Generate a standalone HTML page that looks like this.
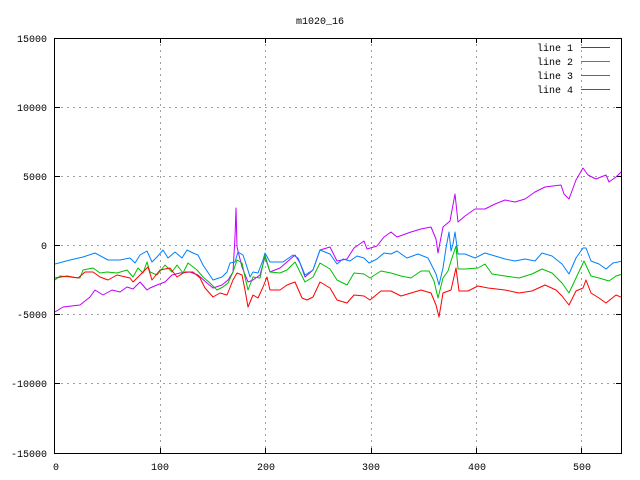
<!DOCTYPE html>
<html><head><style>
html,body{margin:0;padding:0;background:#fff;}
svg{display:block;font-family:"Liberation Mono","DejaVu Sans Mono",monospace;font-size:10px;}
</style></head><body>
<svg width="640" height="480" viewBox="0 0 640 480" xmlns="http://www.w3.org/2000/svg">
<rect width="640" height="480" fill="#fff"/>
<g stroke="#a0a0a0" stroke-width="1" stroke-dasharray="2,4" fill="none">
<line x1="55" y1="107.5" x2="621" y2="107.5"/>
<line x1="55" y1="176.5" x2="621" y2="176.5"/>
<line x1="55" y1="245.5" x2="621" y2="245.5"/>
<line x1="55" y1="314.5" x2="621" y2="314.5"/>
<line x1="55" y1="383.5" x2="621" y2="383.5"/>
<line x1="160.5" y1="38" x2="160.5" y2="453"/>
<line x1="265.5" y1="38" x2="265.5" y2="453"/>
<line x1="371.5" y1="38" x2="371.5" y2="453"/>
<line x1="476.5" y1="38" x2="476.5" y2="453"/>
<line x1="581.5" y1="38" x2="581.5" y2="453"/>
</g>
<g stroke="#000" stroke-width="1" fill="none">
<rect x="54.5" y="38.5" width="567" height="415"/>
<path d="M55 107.5h5M55 176.5h5M55 245.5h5M55 314.5h5M55 383.5h5M616 107.5h5M616 176.5h5M616 245.5h5M616 314.5h5M616 383.5h5M160.5 453v-5M265.5 453v-5M371.5 453v-5M476.5 453v-5M581.5 453v-5M160.5 38v5M265.5 38v5M371.5 38v5M476.5 38v5M581.5 38v5"/>
</g>
<g fill="#000">
<text x="320" y="24" text-anchor="middle">m1020_16</text>
<g text-anchor="end">
<text x="47" y="42">15000</text>
<text x="47" y="111">10000</text>
<text x="47" y="180">5000</text>
<text x="47" y="249">0</text>
<text x="47" y="318">-5000</text>
<text x="47" y="387">-10000</text>
<text x="47" y="457">-15000</text>
</g>
<g text-anchor="middle">
<text x="56" y="470">0</text>
<text x="160" y="470">100</text>
<text x="266" y="470">200</text>
<text x="371" y="470">300</text>
<text x="477" y="470">400</text>
<text x="582" y="470">500</text>
</g>
<g text-anchor="end">
<text x="573" y="51">line 1</text>
<text x="573" y="65">line 2</text>
<text x="573" y="79">line 3</text>
<text x="573" y="93">line 4</text>
</g>
</g>
<rect x="581" y="47" width="29" height="1" fill="#ff0000"/>
<rect x="581" y="61" width="29" height="1" fill="#00c000"/>
<rect x="581" y="75" width="29" height="1" fill="#0080ff"/>
<rect x="581" y="89" width="29" height="1" fill="#c000ff"/>
<defs><clipPath id="c"><rect x="55" y="39" width="566" height="414"/></clipPath></defs>
<g clip-path="url(#c)" fill="none" stroke-width="1" stroke-linejoin="round">
<polyline stroke="#c000ff" points="55,312 63,307 80,305 90,297 95,290 103,295 112,290 120,292 127,287 133,289 140,282 147,290 150,288 157,285 165,282 172,275 180,273 190,272 198,275 207,283 213,288 222,285 228,280 233,272 235,237 236,208 237,247 242,267 248,282 253,280 260,275 265,257 270,272 280,268 287,262 295,255 300,263 305,277 313,270 320,250 330,247 333,253 337,261 347,259 354,248 364,241 367,249 377,246 384,237 391,232 397,237 411,232 421,229 431,227 436,239 438,253 443,227 450,221 455,194 458,222 465,216 475,209 485,209 495,204 505,200 515,202 525,199 535,192 545,187 561,185 564,194 569,199 576,180 583,168 588,175 596,179 606,175 609,182 616,177 623,170"/>
<polyline stroke="#0080ff" points="55,264 70,260 83,257 95,253 108,260 120,260 130,258 135,263 140,255 147,251 152,262 157,257 163,250 168,258 175,252 182,258 187,250 193,253 198,255 203,265 213,280 222,277 227,272 230,263 235,262 238,252 243,255 247,267 250,277 253,272 258,273 263,260 265,253 270,262 283,262 293,255 298,258 305,275 313,270 320,250 330,254 337,264 343,259 350,261 357,256 364,258 369,263 377,259 384,253 391,254 397,251 407,258 418,254 428,258 431,264 436,274 439,285 443,268 446,248 449,232 451,251 453,244 455,232 458,254 465,254 475,258 485,253 495,256 505,259 515,261 525,259 535,261 542,253 552,256 562,264 569,274 576,258 583,248 586,248 591,261 599,264 606,269 613,263 623,261"/>
<polyline stroke="#00c000" points="55,280 60,276 80,278 83,270 93,268 100,273 107,272 117,273 127,270 133,277 138,268 143,273 147,262 150,272 157,275 165,265 172,272 177,265 183,273 188,263 197,270 203,277 210,283 217,290 223,287 228,283 233,272 237,260 242,263 245,277 248,290 253,277 260,278 265,255 270,272 280,273 287,270 295,262 300,272 305,282 313,277 320,263 330,269 337,280 347,285 354,273 364,274 370,278 381,271 391,273 401,276 411,278 421,271 429,271 434,281 438,298 443,278 448,271 451,261 456,246 458,269 465,269 478,268 485,264 492,274 505,276 519,278 532,274 542,269 552,273 562,283 569,293 576,278 584,261 591,276 599,278 609,281 616,276 623,274"/>
<polyline stroke="#ff0000" points="55,278 67,276 78,278 85,272 93,272 100,277 108,280 117,275 130,278 133,282 140,275 148,267 152,280 160,270 170,268 177,277 185,272 193,272 200,278 205,288 213,297 220,293 227,295 233,280 237,273 242,275 245,290 248,307 253,295 258,298 263,287 267,277 270,290 280,290 287,285 295,282 302,298 307,300 313,297 320,282 330,288 337,300 347,303 354,295 364,296 370,300 381,291 391,291 401,296 411,293 421,290 431,293 436,305 439,317 443,293 451,290 456,268 459,291 468,291 478,286 488,288 505,290 519,293 532,291 545,285 556,290 562,296 569,305 576,291 583,288 586,280 591,293 599,298 606,303 616,295 623,298"/>
</g>
</svg>
</body></html>
